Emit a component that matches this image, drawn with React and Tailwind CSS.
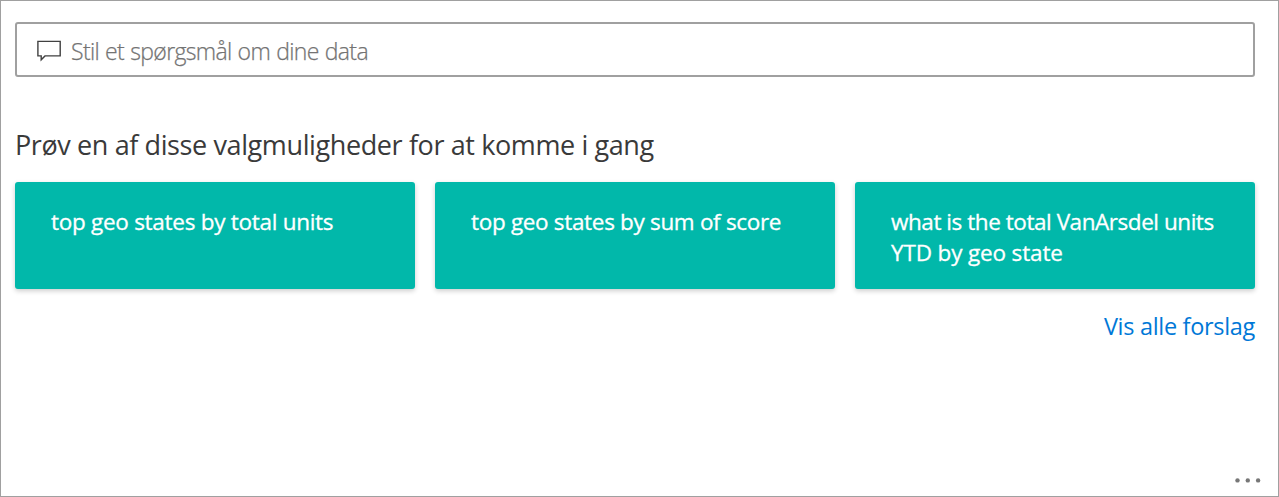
const suggestions = [
  { id: "units", lines: [{ text: "top geo states by total units", tracking: "tracking-[-0.28px]" }] },
  { id: "score", lines: [{ text: "top geo states by sum of score", tracking: "tracking-[-0.32px]" }] },
  {
    id: "ytd",
    lines: [
      { text: "what is the total VanArsdel units", tracking: "tracking-[-0.45px]" },
      { text: "YTD by geo state", tracking: "tracking-[-0.15px]" },
    ],
  },
];

function QuestionBox() {
  return (
    <div className="flex h-[55px] items-center rounded-[3px] border-2 border-[#a0a0a0] bg-white pl-5">
      <svg className="h-6 w-6 shrink-0" viewBox="0 0 24 24" fill="none" stroke="#404040" strokeWidth="1.4">
        <path d="M0.9 3.4H23.2V17.9H8L4.2 21.8V17.9H0.9Z" />
      </svg>
      <span className="mt-[3px] ml-2.5 text-[23px] leading-[31px] font-light tracking-[-0.66px] whitespace-nowrap text-[#737373] [-webkit-text-stroke:0.25px_#737373] [word-spacing:0.8px]">
        Stil et spørgsmål om dine data
      </span>
    </div>
  );
}

function SuggestionCard({ lines }) {
  return (
    <button className="flex h-[107px] flex-col items-start rounded-[3px] bg-[#01b8aa] pt-6 pl-9 text-left text-[22.5px] leading-[31px] text-white shadow-[0_2px_5px_rgba(0,0,0,0.2)] [-webkit-text-stroke:0.3px_#ffffff]">
      {lines.map((line) => (
        <span key={line.text} className={`whitespace-nowrap ${line.tracking}`}>
          {line.text}
        </span>
      ))}
    </button>
  );
}

export default function App() {
  return (
    <main className="flex h-[497px] w-[1279px] flex-col border border-[#a0a0a0] bg-white pt-[21px] pr-[23px] pl-3.5 font-['Open_Sans',sans-serif]">
      <QuestionBox />
      <h1 className="mt-[50px] h-9 text-[27px] leading-9 tracking-[-0.39px] whitespace-nowrap text-[#3a3a3a]">
        Prøv en af disse valgmuligheder for at komme i gang
      </h1>
      <div className="mt-[19px] grid grid-cols-3 gap-5">
        {suggestions.map((s) => (
          <SuggestionCard key={s.id} lines={s.lines} />
        ))}
      </div>
      <a className="mt-[21px] self-end text-[23.5px] leading-8 tracking-[-0.31px] whitespace-nowrap text-[#0078d7]">
        Vis alle forslag
      </a>
      <svg className="mt-auto mr-[-7px] mb-3 h-1.5 w-7 self-end" viewBox="0 0 28 6" fill="#777777">
        <circle cx="3.5" cy="2.4" r="2.2" />
        <circle cx="13.8" cy="2.4" r="2.2" />
        <circle cx="24.1" cy="2.4" r="2.2" />
      </svg>
    </main>
  );
}
